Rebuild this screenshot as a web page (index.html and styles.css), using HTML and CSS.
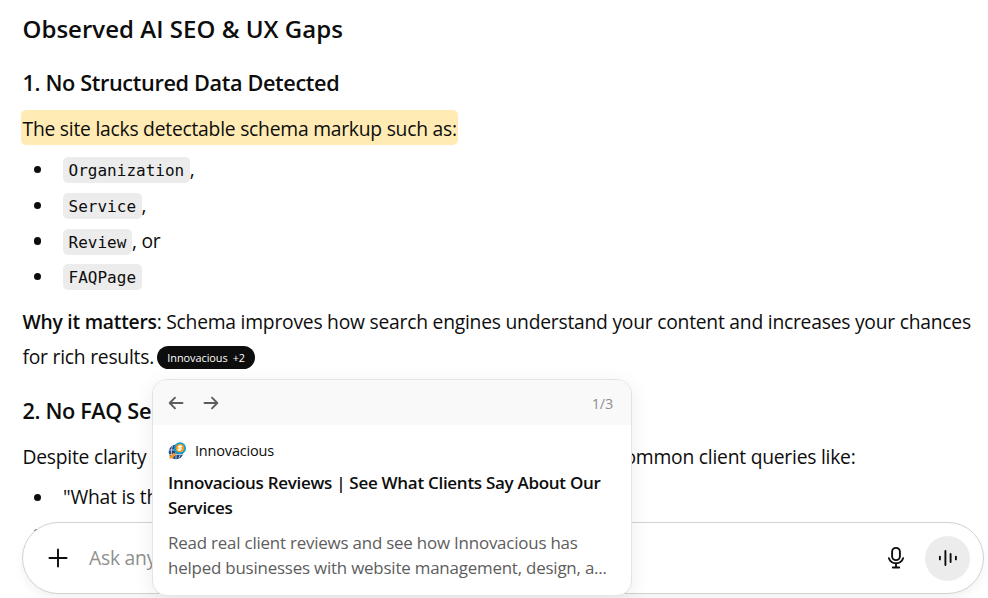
FILE: index.html
```html
<!DOCTYPE html>
<html lang="en">
<head>
<meta charset="utf-8">
<title>Observed AI SEO &amp; UX Gaps</title>
<link rel="stylesheet" href="styles.css">
</head>
<body>
<main class="answer">
  <h2>Observed AI SEO &amp; UX Gaps</h2>
  <h3>1. No Structured Data Detected</h3>
  <p><mark>The site lacks detectable schema markup such as:</mark></p>
  <ul>
    <li><code>Organization</code>,</li>
    <li><code>Service</code>,</li>
    <li><code>Review</code>, or</li>
    <li><code>FAQPage</code></li>
  </ul>
  <p class="why"><strong>Why it matters</strong>: Schema improves how search engines understand your content and increases your chances<br>for rich results. <span class="pill"><span>Innovacious</span><span>+2</span></span></p>
  <h3>2. No FAQ Se</h3>
  <div class="split"><p>Despite clarity</p><p>common client queries like:</p></div>
  <ul>
    <li>"What is the</li>
    <li></li>
  </ul>
</main>

<form class="composer">
  <svg class="plus" viewBox="0 0 20 20"><path d="M10 1.4v17.2M1.4 10h17.2"/></svg>
  <span class="placeholder">Ask any</span>
  <svg class="mic" viewBox="0 0 18 24"><rect x="5.1" y="1.9" width="7.8" height="12.2" rx="3.9"/><path d="M1.9 12.2c1.2 3.3 3.8 5.1 7.1 5.1s5.900-1.800 7.100-5.100M9 17.500v4M5.800 21.500h6.400"/></svg>
  <span class="voice"><svg viewBox="0 0 20 18"><path d="M1.900 7.600v2.800M7.400 2v14M12.600 5v8M17.900 7.600v2.800"/></svg></span>
</form>

<aside class="card">
  <header>
    <svg class="arrow" viewBox="0 0 16 14"><path d="M14.500 7H1.800M7 1.700L1.700 7 7 12.300"/></svg>
    <svg class="arrow" viewBox="0 0 16 14"><path d="M1.500 7h12.700M9 1.700L14.300 7 9 12.300"/></svg>
    <span class="count">1/3</span>
  </header>
  <div class="body">
    <div class="source">
      <svg viewBox="0 0 18 18">
        <circle cx="8" cy="10" r="7.300" fill="#24457c"/>
        <path d="M1 8h14M1 12.500h14M8 3v14M4.500 4c-1.800 4-1.500 8 .5 12M11.500 5c1.500 3 1.200 8-.5 11" fill="none" stroke="#c9d6ea" stroke-width=".9"/>
        <circle cx="12" cy="6.200" r="6" fill="#169fce"/>
        <circle cx="12" cy="6.200" r="4.100" fill="#f49a25"/>
        <path d="M13.300 4.500c-1.800-1.200-3.500.8-1.500 1.500s.3 2.800-1.500 1.600" fill="none" stroke="#fff3d2"/>
        <path d="M2.800 15.200l3.200-2.700" stroke="#f49a25" stroke-width="3"/>
      </svg>
      <span>Innovacious</span>
    </div>
    <h4>Innovacious Reviews | See What Clients Say About Our<br>Services</h4>
    <p class="desc">Read real client reviews and see how Innovacious has<br>helped businesses with website management, design, a...</p>
  </div>
</aside>
</body>
</html>
```
FILE: styles.css
```css
* { box-sizing: border-box; }

body {
  margin: 0;
  height: 598px;
  overflow: hidden;
  background: #fff;
  color: #0d0d0d;
  font: 400 19.3px/35px "Open Sans", "Noto Sans", sans-serif;
  letter-spacing: -0.238px;
}

h2, h3, h4, p, ul { margin: 0; }

svg {
  display: block;
  flex: none;
  fill: none;
  stroke: currentColor;
  stroke-width: 1.9;
  stroke-linecap: round;
  stroke-linejoin: round;
}

.answer { padding: 11px 0 0 22.5px; white-space: nowrap; }

h2 { font-size: 24px; line-height: 35px; font-weight: 600; letter-spacing: 0.03px; }
h3 { margin-top: 19px; font-size: 21.7px; line-height: 35px; font-weight: 600; letter-spacing: -0.36px; }
h3 + p, .split { margin-top: 11px; }
strong { font-weight: 600; }

mark {
  margin-left: -1.5px;
  padding: 5px 1px 3px 1.5px;
  border-radius: 5px;
  background: #ffebb3;
  color: inherit;
}

ul { margin-top: 5.4px; padding: 0 0 0 40.5px; list-style: none; }
li { height: 35.7px; line-height: 35.7px; }
li::before {
  content: "";
  display: inline-block;
  width: 7.4px;
  height: 7.4px;
  margin: 0 21.6px 0 -29px;
  border-radius: 50%;
  background: #0d0d0d;
  vertical-align: 3px;
}

code {
  padding: 4px 5.6px 3px;
  border-radius: 5px;
  background: #ececec;
  font: 16px/1 "DejaVu Sans Mono", monospace;
  letter-spacing: 0;
}

.why { margin-top: 9.6px; }

.pill {
  display: inline-flex;
  gap: 5px;
  height: 23px;
  margin-left: -1.4px;
  padding: 0 10px;
  border-radius: 12px;
  background: #0d0d0d;
  color: #fff;
  font-size: 10.9px;
  line-height: 23px;
  letter-spacing: -0.05px;
  vertical-align: 2px;
}

.split { display: grid; grid-template-columns: 593px 1fr; }

.composer {
  position: absolute;
  left: 22px;
  top: 522px;
  width: 962px;
  height: 72px;
  display: flex;
  align-items: center;
  padding: 0 13px 0 24.5px;
  border: 1px solid #d2d2d2;
  border-radius: 36px;
  background: #fff;
  box-shadow: 0 5px 10px rgba(0, 0, 0, .05);
}
.plus { width: 20px; height: 20px; }
.placeholder { flex: 1; margin-left: 21.5px; margin-top: -1px; color: #8f8f8f; }
.mic { width: 18px; height: 24px; margin-right: 20.5px; }
.voice {
  display: grid;
  place-items: center;
  width: 45px;
  height: 45px;
  border-radius: 50%;
  background: #ececec;
}
.voice svg { width: 20px; height: 18px; }

.card {
  position: absolute;
  left: 152px;
  top: 379px;
  width: 480px;
  height: 217px;
  overflow: hidden;
  border: 1px solid #e3e3e3;
  border-radius: 15px;
  background: #fff;
  box-shadow: 0 5px 20px rgba(0, 0, 0, .08);
}
.card header {
  display: flex;
  align-items: center;
  gap: 19px;
  height: 45px;
  padding: 0 18px 0 15px;
  background: #f9f9f9;
  color: #5d5d5d;
}
.arrow { width: 16px; height: 14px; }
.count { margin-left: auto; padding-top: 1px; color: #8f8f8f; font-size: 14.5px; }
.body { padding: 16px 15px 0; }
.source { display: flex; align-items: center; gap: 9px; height: 20px; font-size: 14.5px; line-height: 20px; letter-spacing: -0.18px; }
.source svg { width: 18px; height: 18px; margin-top: -1px; stroke: none; }
h4 { margin-top: 9px; font-size: 17px; line-height: 25px; font-weight: 600; letter-spacing: -0.29px; white-space: nowrap; }
.desc { margin-top: 10px; color: #5d5d5d; font-size: 16.9px; line-height: 25px; letter-spacing: -0.195px; white-space: nowrap; }
```
